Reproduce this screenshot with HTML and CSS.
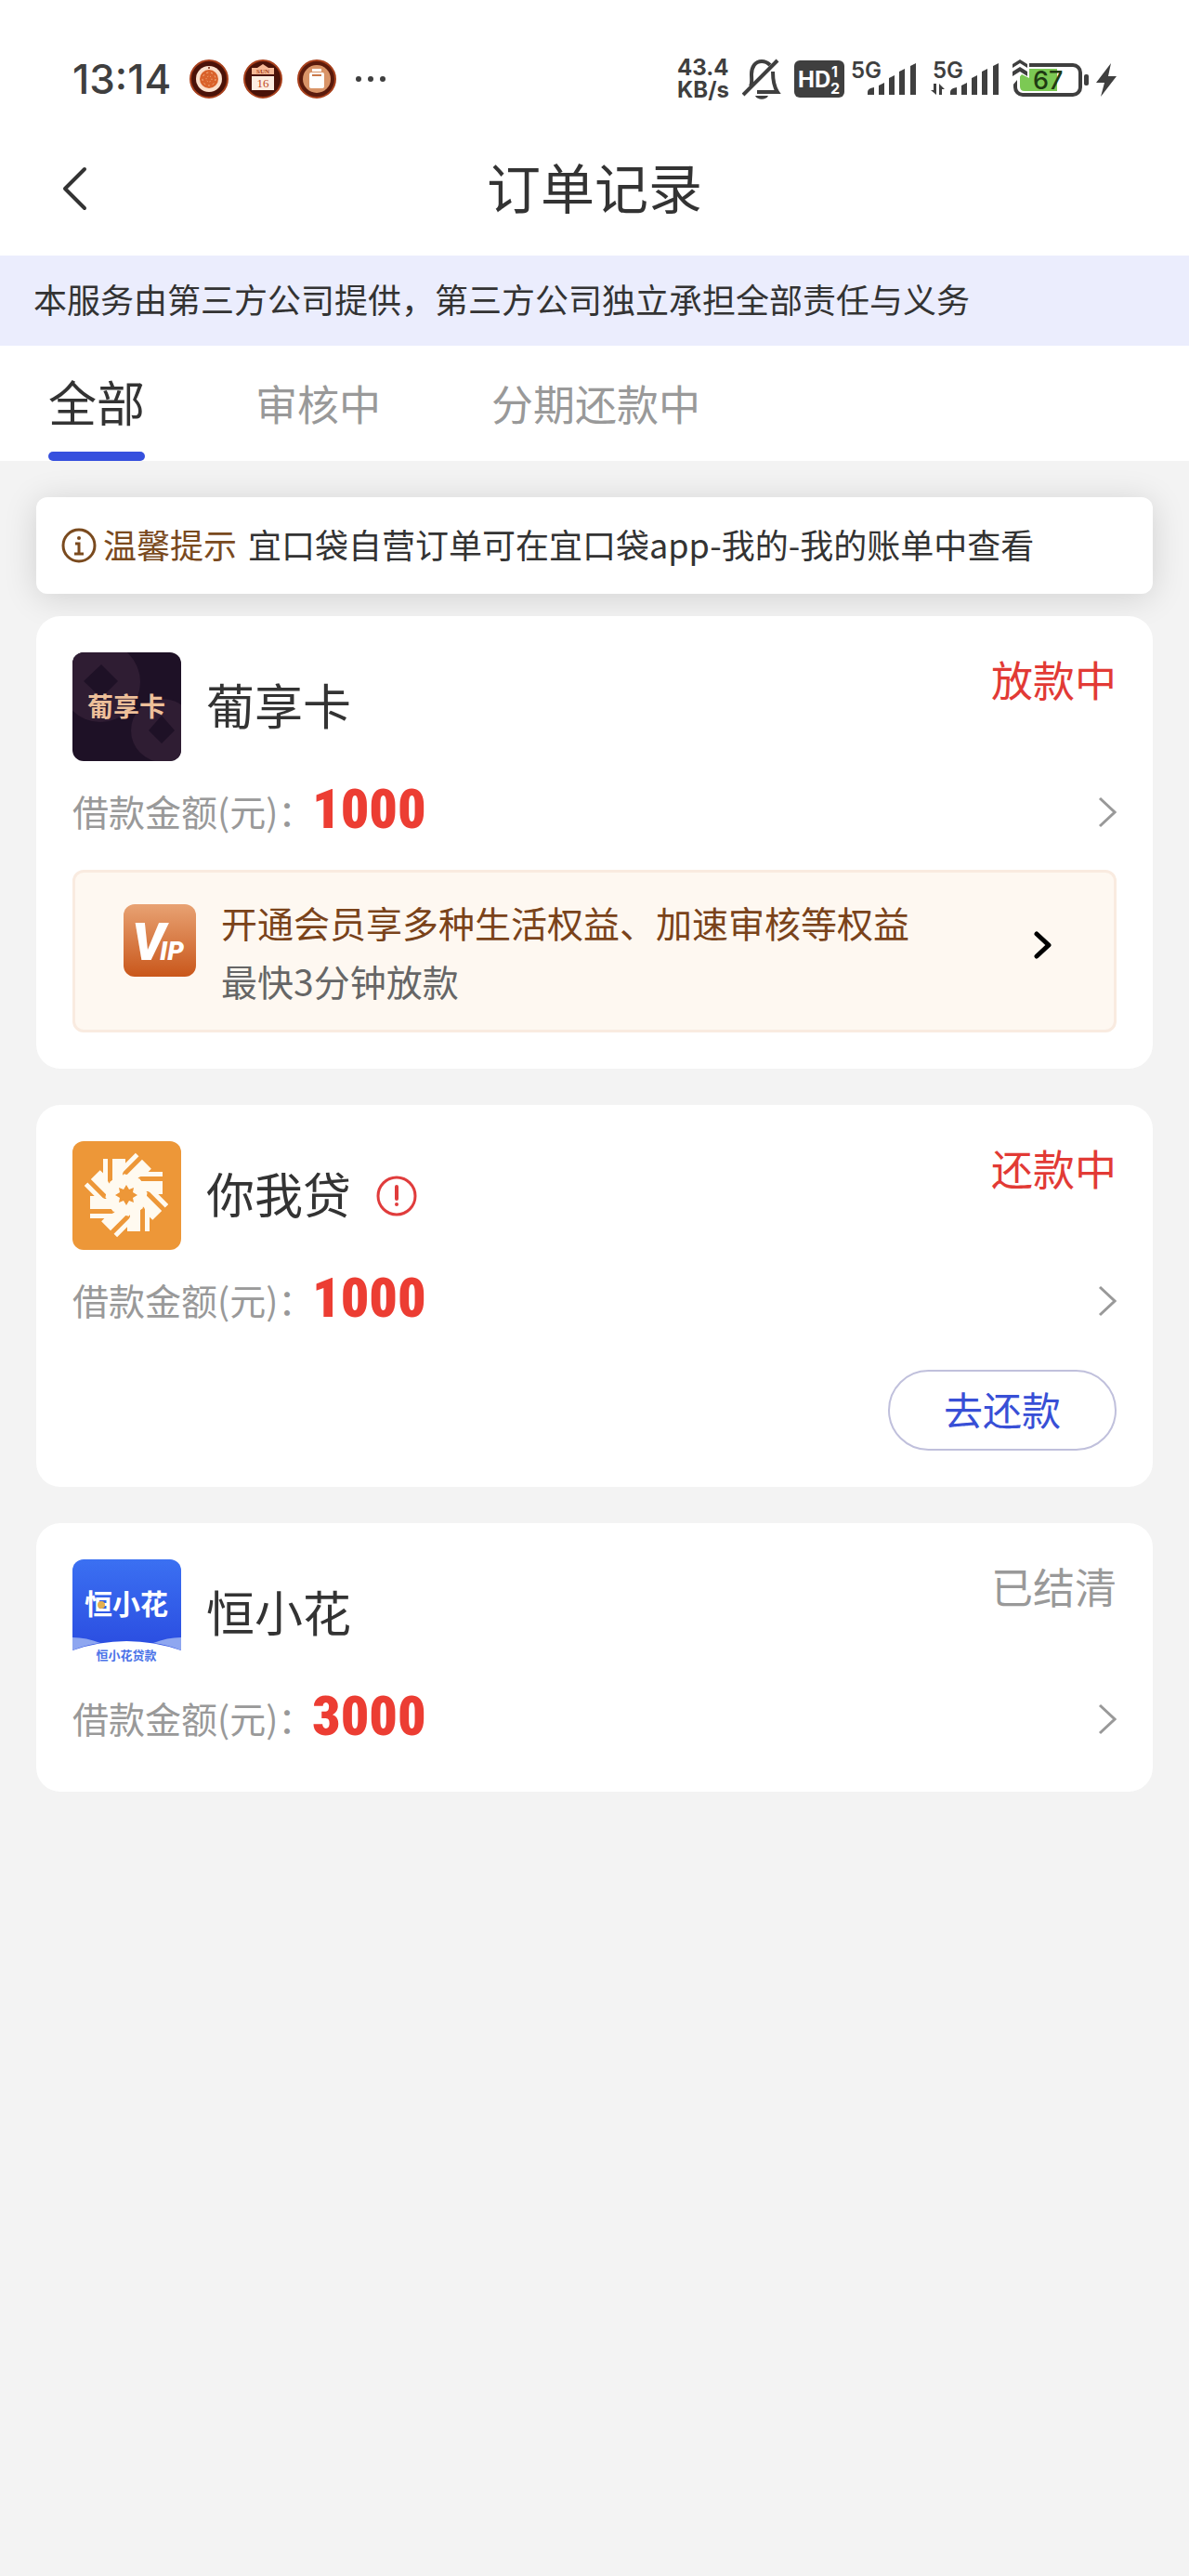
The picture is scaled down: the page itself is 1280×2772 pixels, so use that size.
FILE: index.html
```
<!DOCTYPE html>
<html lang="zh-CN">
<head>
  <meta charset="UTF-8">
  <meta name="viewport" content="width=device-width, initial-scale=1.0">
  <title>订单记录</title>
  <link rel="stylesheet" href="styles.css">
</head>
<body>

  <div class="status-bar">
    <span class="clock">13:14</span>
    <div class="notify">
      <svg width="42" height="42" viewBox="0 0 42 42">
        <circle cx="21" cy="21" r="20" fill="#4a1208" stroke="#a8401c" stroke-width="2"/>
        <circle cx="21" cy="21" r="14" fill="#fbe0cc"/>
        <circle cx="21" cy="21" r="10" fill="#d9622b"/>
        <circle cx="21" cy="21" r="7" fill="none" stroke="#f6b98c" stroke-width="1" stroke-dasharray="2 3"/>
        <circle cx="21" cy="21" r="3" fill="none" stroke="#f6b98c" stroke-width="1" stroke-dasharray="1 2"/>
        <circle cx="21" cy="9" r="1" fill="#7a2a10"/>
      </svg>
      <svg width="42" height="42" viewBox="0 0 42 42">
        <circle cx="21" cy="21" r="20" fill="#4a1208" stroke="#a8401c" stroke-width="2"/>
        <path d="M9 16V9h6l6-4 6 4h6v7z" fill="#f5b896"/>
        <path d="M9 18h24v15H9z" fill="#fdeee2"/>
        <text class="cal-day" x="21" y="15">SUN</text>
        <text class="cal-date" x="21" y="30">16</text>
      </svg>
      <svg width="42" height="42" viewBox="0 0 42 42">
        <circle cx="21" cy="21" r="20" fill="#5a1a0c" stroke="#a8401c" stroke-width="2"/>
        <circle cx="21" cy="21" r="15" fill="#d99468"/>
        <path d="M16 10h10v3H16z" fill="#fff"/>
        <rect x="13" y="14" width="16" height="17" rx="2" fill="#fff"/>
        <path d="M16 17h10" stroke="#c9794a" stroke-width="2"/>
      </svg>
    </div>
    <svg class="more" width="34" height="8" viewBox="0 0 34 8">
      <circle cx="4" cy="4" r="3"/><circle cx="17" cy="4" r="3"/><circle cx="30" cy="4" r="3"/>
    </svg>

    <div class="system">
      <div class="speed"><span>43.4</span><span>KB/s</span></div>
      <svg width="42" height="46" viewBox="0 0 42 46">
        <g fill="none" stroke="#3f3f3f" stroke-width="4">
          <path d="M9 31c2-4 1-8 1-13C10 10 14 4 21 4c4 0 7 2 9 4"/>
          <path d="M33 15c0 10 1 16 5 22H16"/>
          <path d="M1 40 38 3"/>
        </g>
        <path d="M14 41h14c-2 5-12 5-14 0z" fill="#3f3f3f"/>
      </svg>
      <svg class="hd" width="54" height="40" viewBox="0 0 54 40">
        <rect width="54" height="40" rx="6" fill="#3f3f3f"/>
        <text class="hd-text" x="4" y="29">HD</text>
        <text class="hd-sim" x="40" y="18">1</text>
        <text class="hd-sim" x="39" y="36">2</text>
      </svg>
      <svg class="signal" width="72" height="52" viewBox="0 -6 72 52">
        <text class="net" x="0" y="19">5G</text>
        <path d="M18 37v-3q0-4 7-5v8zM30 37V27l6-3v13zM41 37V19l6-3v21zM52 37V12l6-3v28zM64 37V6l6-3v34z"/>
      </svg>
      <svg class="signal" width="74" height="52" viewBox="0 -6 74 52">
        <text class="net" x="2" y="19">5G</text>
        <path d="M0 32h3v-7h3v12zM9 37V25l6 6h-3v6zM21 37v-3q0-4 7-5v8zM33 37V27l6-3v13zM44 37V19l6-3v21zM55 37V12l6-3v28zM67 37V6l6-3v34z"/>
      </svg>
      <svg class="battery" width="112" height="42" viewBox="0 0 112 42">
        <rect x="3" y="6" width="70" height="32" rx="8" fill="#fff" stroke="#3f3f3f" stroke-width="4"/>
        <path d="M8 10h40v24H13q-5 0-5-5z" fill="#7cc954"/>
        <path d="M0 0h18v20l-8-4-10 12z" fill="#fff"/>
        <path d="M0 9V5l8-5 8 5v4L8 4zM0 18v-5l8-5 8 5v5l-8-5z" fill="#3f3f3f"/>
        <text class="level" x="22" y="32">67</text>
        <rect x="77" y="16" width="5" height="12" rx="2" fill="#3f3f3f"/>
        <path d="M106 4 90 25h9l-4 15 17-22h-9z" fill="#3f3f3f"/>
      </svg>
    </div>
  </div>

  <header class="header">
    <button class="back" aria-label="返回">
      <svg width="28" height="48" viewBox="0 0 28 48">
        <path d="M25 3 4 24l21 21" fill="none" stroke="#333" stroke-width="4" stroke-linecap="round" stroke-linejoin="round"/>
      </svg>
    </button>
    <h1>订单记录</h1>
  </header>

  <p class="banner">本服务由第三方公司提供，第三方公司独立承担全部责任与义务</p>

  <nav class="tabs">
    <a class="tab active" href="#all">全部</a>
    <a class="tab" href="#review">审核中</a>
    <a class="tab" href="#repay">分期还款中</a>
  </nav>

  <main class="content">
    <div class="notice">
      <svg width="38" height="38" viewBox="0 0 38 38">
        <circle cx="19" cy="19" r="17" fill="none" stroke="#7a4a1e" stroke-width="3"/>
        <circle cx="19" cy="11" r="2" fill="#7a4a1e"/>
        <path d="M15 17h4v11M14 28h10" fill="none" stroke="#7a4a1e" stroke-width="3"/>
      </svg>
      <strong>温馨提示</strong>
      <span>宜口袋自营订单可在宜口袋app-我的-我的账单中查看</span>
    </div>

    <section class="card">
      <div class="card-head">
        <svg class="logo" viewBox="0 0 117 117">
          <rect width="117" height="117" fill="#1e1126"/>
          <circle cx="30" cy="32" r="43" fill="#2f1d33"/>
          <circle cx="97" cy="84" r="34" fill="#2f1d33"/>
          <path d="M31 13 49 31 31 49 12 31zM96 68l14 16-14 14-14-14z" fill="#1e1126"/>
          <text class="logo-dark" x="58" y="69">葡享卡</text>
        </svg>
        <h2>葡享卡</h2>
        <span class="state red">放款中</span>
      </div>
      <a class="amount-row" href="#order-1">
        <span class="label">借款金额(元)：</span>
        <span class="amount">1000</span>
        <svg class="arrow" width="20" height="34" viewBox="0 0 20 34"><path d="M2 2 18 17 2 32"/></svg>
      </a>
      <a class="vip" href="#vip">
        <svg class="vip-icon" width="78" height="78" viewBox="0 0 78 78">
          <defs>
            <linearGradient id="vipBg" x1="0" y1="0" x2="0" y2="1">
              <stop offset="0" stop-color="#e8a273"/>
              <stop offset="1" stop-color="#c9571b"/>
            </linearGradient>
          </defs>
          <rect width="78" height="78" rx="12" fill="url(#vipBg)"/>
          <text class="vip-v" x="9" y="60">V<tspan class="vip-ip" x="39">IP</tspan></text>
        </svg>
        <div class="vip-text">
          <p class="vip-title">开通会员享多种生活权益、加速审核等权益</p>
          <p>最快3分钟放款</p>
        </div>
        <svg class="vip-arrow" width="20" height="30" viewBox="0 0 20 30"><path d="M3 3 16 15 3 27"/></svg>
      </a>
    </section>

    <section class="card">
      <div class="card-head">
        <svg class="logo" viewBox="0 0 117 117">
          <defs>
            <path id="ray" d="M33 19h5v25l-5-5zM43 19h14v7l-3 9v14l-11 1-3-6 3-2z"/>
          </defs>
          <rect width="117" height="117" fill="#ed9738"/>
          <g fill="#fffaf0">
            <circle cx="58" cy="58" r="22"/>
            <use href="#ray"/>
            <use href="#ray" transform="rotate(45 58 58)"/>
            <use href="#ray" transform="rotate(90 58 58)"/>
            <use href="#ray" transform="rotate(135 58 58)"/>
            <use href="#ray" transform="rotate(180 58 58)"/>
            <use href="#ray" transform="rotate(225 58 58)"/>
            <use href="#ray" transform="rotate(270 58 58)"/>
            <use href="#ray" transform="rotate(315 58 58)"/>
          </g>
          <path d="M58 47l3 5 5-2-1 5 5 3-5 3 1 5-5-2-3 5-3-5-5 2 1-5-5-3 5-3-1-5 5 2z" fill="#ed9738"/>
        </svg>
        <h2>你我贷</h2>
        <svg class="warn" width="44" height="44" viewBox="0 0 44 44">
          <circle cx="22" cy="22" r="20" fill="none" stroke="#e03c3c" stroke-width="3"/>
          <path d="M22 12v13" stroke="#e03c3c" stroke-width="4" stroke-linecap="round"/>
          <circle cx="22" cy="31" r="2" fill="#e03c3c"/>
        </svg>
        <span class="state red">还款中</span>
      </div>
      <a class="amount-row" href="#order-2">
        <span class="label">借款金额(元)：</span>
        <span class="amount">1000</span>
        <svg class="arrow" width="20" height="34" viewBox="0 0 20 34"><path d="M2 2 18 17 2 32"/></svg>
      </a>
      <div class="actions">
        <button class="repay">去还款</button>
      </div>
    </section>

    <section class="card">
      <div class="card-head">
        <svg class="logo" viewBox="0 0 117 117">
          <defs>
            <linearGradient id="flowerBg" x1="0" y1="0" x2="0" y2="1">
              <stop offset="0" stop-color="#3b70f2"/>
              <stop offset="1" stop-color="#2a4ce0"/>
            </linearGradient>
          </defs>
          <rect width="117" height="117" fill="#fff"/>
          <path d="M0 0h117v98Q58 78 0 98z" fill="url(#flowerBg)"/>
          <path d="M0 84q15 0 30 6Q14 92 0 98zM117 84q-15 0-30 6 16 2 30 8z" fill="#8ea6f0"/>
          <text class="logo-blue" x="58" y="59">恒小花</text>
          <circle cx="31" cy="49" r="4" fill="#e3b04f"/>
          <text class="logo-sub" x="58" y="108">恒小花贷款</text>
        </svg>
        <h2>恒小花</h2>
        <span class="state">已结清</span>
      </div>
      <a class="amount-row" href="#order-3">
        <span class="label">借款金额(元)：</span>
        <span class="amount">3000</span>
        <svg class="arrow" width="20" height="34" viewBox="0 0 20 34"><path d="M2 2 18 17 2 32"/></svg>
      </a>
    </section>
  </main>

</body>
</html>
```

FILE: styles.css
```
* {
  margin: 0;
  padding: 0;
  box-sizing: border-box;
}

body {
  min-height: 100vh;
  font-family: "Noto Sans CJK SC", sans-serif;
  font-size: 36px;
  color: #333;
  background: #f3f3f3;
}

a {
  color: inherit;
  text-decoration: none;
}

button {
  font-family: inherit;
  background: none;
  border: none;
  cursor: pointer;
}

svg {
  flex-shrink: 0;
}

/* status bar */
.status-bar {
  display: flex;
  align-items: center;
  height: 130px;
  padding: 40px 78px 0;
  background: #fff;
  font-family: Inter, sans-serif;
  color: #3f3f3f;
}

.clock {
  font-size: 44px;
  font-weight: 500;
}

.notify {
  display: flex;
  gap: 16px;
  margin-left: 20px;
}

.cal-day {
  font: bold 7px "Liberation Serif", serif;
  text-anchor: middle;
  fill: #a8401c;
}

.cal-date {
  font: 13px "Liberation Serif", serif;
  text-anchor: middle;
  fill: #c0481c;
}

.more {
  margin-left: 20px;
  fill: #3f3f3f;
}

.system {
  display: flex;
  align-items: center;
  margin-left: auto;
}

.speed {
  display: flex;
  flex-direction: column;
  margin-right: 14px;
  font-size: 24px;
  font-weight: 700;
  line-height: 24px;
}

.hd {
  margin-left: 14px;
}

.hd-text {
  font-size: 24px;
  font-weight: 700;
  fill: #fff;
}

.hd-sim {
  font-size: 16px;
  font-weight: 700;
  fill: #fff;
}

.signal {
  margin-left: 7px;
  fill: #3f3f3f;
}

.signal + .signal {
  margin-left: 14px;
}

.net {
  font-size: 24px;
  font-weight: 600;
}

.battery {
  margin-left: 14px;
}

.level {
  font-size: 27px;
  font-weight: 500;
  fill: #1f3a12;
}

/* header */
.header {
  display: flex;
  align-items: center;
  justify-content: space-between;
  height: 145px;
  padding: 0 66px;
  background: #fff;
}

.header::after {
  content: "";
  width: 28px;
}

.back {
  width: 28px;
  height: 48px;
}

h1 {
  padding-bottom: 6px;
  font-size: 58px;
  font-weight: 400;
}

.banner {
  padding: 0 36px 4px;
  line-height: 93px;
  background: #ebedfd;
}

.tabs {
  display: flex;
  gap: 119px;
  height: 124px;
  padding: 0 52px;
  background: #fff;
}

.tab {
  font-size: 45px;
  line-height: 124px;
  color: #999;
}

.tab.active {
  position: relative;
  font-size: 52px;
  line-height: 120px;
  color: #333;
}

.tab.active::after {
  content: "";
  position: absolute;
  left: 0;
  right: 0;
  bottom: 0;
  height: 10px;
  background: #3650de;
  border-radius: 5px;
}

/* list */
.content {
  padding: 39px;
}

.notice {
  display: flex;
  align-items: center;
  margin-bottom: 24px;
  padding: 0 27px;
  line-height: 100px;
  background: #fff;
  border-radius: 12px;
  box-shadow: 0 4px 36px rgba(0, 0, 0, 0.14);
}

.notice strong,
.notice span {
  padding-bottom: 4px;
}

.notice strong {
  margin: 0 12px 0 7px;
  font-weight: 400;
  color: #7a4a1e;
}

.card {
  margin-bottom: 39px;
  padding: 39px;
  background: #fff;
  border-radius: 26px;
}

.notice + .card {
  position: relative;
}

.card-head {
  display: flex;
  align-items: center;
  gap: 27px;
}

.logo {
  width: 117px;
  height: 117px;
  border-radius: 12px;
}

.logo text {
  text-anchor: middle;
  font-weight: 700;
}

.logo-dark {
  font-size: 28px;
  fill: #eec09a;
}

.logo-blue {
  font-size: 30px;
  fill: #fff;
}

.logo-sub {
  font-size: 13px;
  fill: #4a72e8;
}

h2 {
  padding-bottom: 6px;
  font-size: 52px;
  font-weight: 400;
}

.state {
  align-self: flex-start;
  margin-left: auto;
  font-size: 45px;
  line-height: 58px;
  color: #999;
}

.red {
  color: #e23a35;
}

.amount-row {
  display: flex;
  align-items: center;
  height: 78px;
  margin-top: 16px;
}

.label {
  width: 258px;
  padding-bottom: 4px;
  font-size: 39px;
  color: #999;
  white-space: nowrap;
}

.amount {
  padding-bottom: 6px;
  font-family: "Liberation Sans Narrow", "Roboto Condensed", Roboto, sans-serif;
  font-size: 60px;
  font-weight: 900;
  line-height: 72px;
  color: #ec3d33;
}

.arrow {
  margin-left: auto;
  fill: none;
  stroke: #999;
  stroke-width: 3;
}

.vip {
  display: flex;
  align-items: flex-start;
  margin-top: 23px;
  padding: 22px 66px 21px 52px;
  font-size: 39px;
  line-height: 63px;
  color: #666;
  background: #fef8f1;
  border: 3px solid #f9ebe0;
  border-radius: 12px;
}

.vip-icon {
  margin: 12px 27px 0 0;
}

.vip-v {
  font: italic 900 56px Roboto, sans-serif;
  fill: #fff;
}

.vip-ip {
  font-size: 28px;
}

.vip-title {
  color: #7a431a;
}

.vip-arrow {
  margin: 41px 0 0 auto;
  fill: none;
  stroke: #000;
  stroke-width: 5;
  stroke-linecap: round;
  stroke-linejoin: round;
}

.actions {
  display: flex;
  justify-content: flex-end;
  margin-top: 35px;
}

.repay {
  padding: 0 58px 4px;
  font-size: 42px;
  line-height: 79px;
  color: #384fd6;
  border: 2px solid #c0c0dc;
  border-radius: 44px;
}
```
